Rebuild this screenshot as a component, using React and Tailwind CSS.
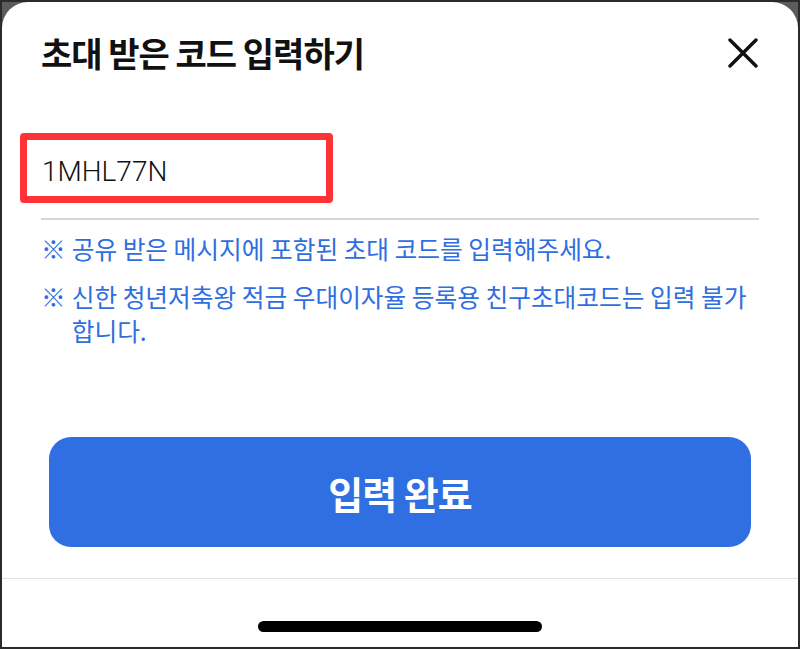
export default function App() {
  const kr = { fontFamily: '"Noto Sans CJK KR", "Noto Sans", sans-serif' }

  return (
    <div className="w-[800px] h-[649px] border-2 border-[#2b2b2b] bg-[#5c5c5c] overflow-hidden">
      <div className="h-full bg-white rounded-t-[26px] flex flex-col" style={kr}>
        {/* header */}
        <div className="flex items-center justify-between pt-[33px] pl-[39px] pr-[40px]">
          <h1 className="text-[34px] leading-[36px] font-bold tracking-[-1px] text-[#111]">
            초대 받은 코드 입력하기
          </h1>
          <button className="w-[30px] h-[30px] flex items-center justify-center">
            <svg viewBox="0 0 30 30" className="w-[30px] h-[30px]">
              <path d="M2 2 L28 28 M28 2 L2 28" stroke="#111" strokeWidth="3.4" strokeLinecap="round" fill="none" />
            </svg>
          </button>
        </div>

        {/* input field */}
        <div className="relative mt-[62px] mx-[39px] h-[87px] border-b-2 border-[#d3d6db] pt-[22px]">
          <div
            className="text-[28px] leading-[34px] font-light text-[#111] pl-[1px]"
            style={{ fontFamily: 'Roboto, "Liberation Sans", sans-serif' }}
          >
            1MHL77N
          </div>
          <div className="absolute left-[-21px] top-0 w-[313px] h-[70px] border-[7px] border-[#fd3338] rounded-[4px]" />
        </div>

        {/* notes */}
        <div className="mt-[11px] mx-[39px] flex flex-col gap-[14px] text-[24.7px] leading-[34px] text-[#2f6ee0]">
          <p className="flex gap-[6px]">
            <span>※</span>
            <span>공유 받은 메시지에 포함된 초대 코드를 입력해주세요.</span>
          </p>
          <p className="flex gap-[6px]">
            <span>※</span>
            <span>신한 청년저축왕 적금 우대이자율 등록용 친구초대코드는 입력 불가 합니다.</span>
          </p>
        </div>

        {/* button */}
        <button className="mt-[90px] mx-[47px] h-[110px] rounded-[22px] bg-[#2f6fe1] text-white text-[38px] font-bold tracking-[-1px] flex items-center justify-center">
          입력 완료
        </button>

        <div className="mt-[31px] border-t border-[#e2e2e2]" />

        <div className="mt-[42px] flex justify-center">
          <div className="w-[284px] h-[11px] rounded-full bg-black" />
        </div>
      </div>
    </div>
  )
}
